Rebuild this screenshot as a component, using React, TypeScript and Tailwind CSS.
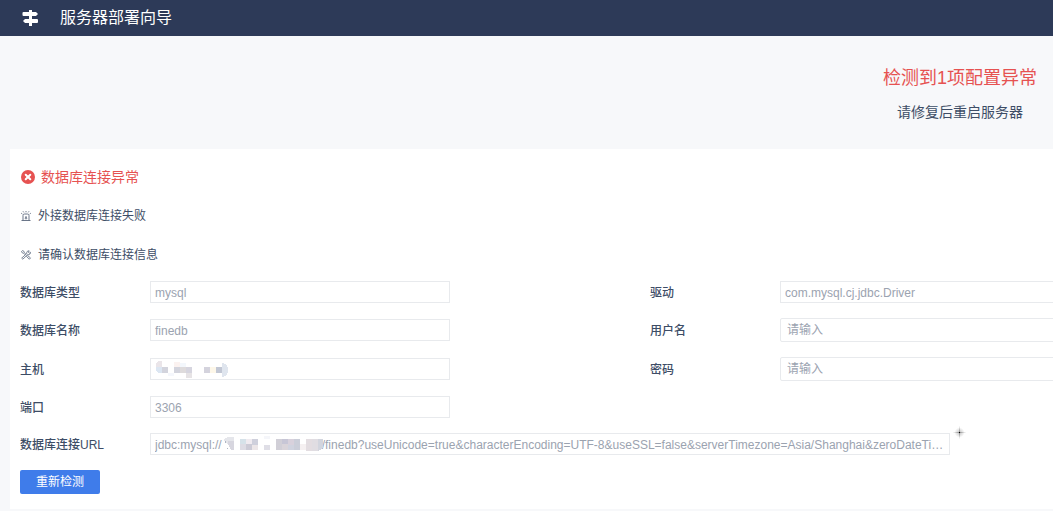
import React from 'react';

const labelClass = 'w-[130px] shrink-0 pt-0.5 text-xs font-medium text-[#3d4d66]';
const readonlyClass =
  'h-[22px] w-full border border-[#e8eaed] bg-white px-1 pt-px text-xs text-[#9ba3b0] text-ellipsis outline-none';
const editableClass =
  'h-6 w-full rounded-xs border border-[#e8eaed] bg-white px-1.5 text-xs text-[#3d4d66] placeholder:text-[#9ba3b0] outline-none';

// The address part is hidden, so the value only keeps room for it
const hiddenHost = '\u00a0'.repeat(30);
const url = `jdbc:mysql://${hiddenHost}/finedb?useUnicode=true&characterEncoding=UTF-8&useSSL=false&serverTimezone=Asia/Shanghai&zeroDateTimeBehavior=convertToNull`;

type FieldProps = {
  id: string;
  label: string;
  value?: string;
  type?: string;
  editable?: boolean;
  width?: string;
  children?: React.ReactNode;
};

const Field: React.FC<FieldProps> = ({ id, label, value, type = 'text', editable = false, width = 'w-[300px]', children }) => (
  <div className="flex items-center">
    <label htmlFor={id} className={labelClass}>{label}</label>
    <div className={`relative flex shrink-0 ${width}`}>
      {editable ? (
        <input id={id} type={type} placeholder="请输入" className={editableClass} />
      ) : (
        <input id={id} type={type} value={value} readOnly className={readonlyClass} />
      )}
      {children}
    </div>
  </div>
);

const SignpostIcon = () => (
  <svg width="16" height="16" viewBox="0 0 16 16" fill="#fff" aria-hidden="true">
    <path d="M7 0h3v16H7z" />
    <path d="M1.500 2H14l2 2-2 2H1.500Q.5 6 .5 5V3q0-1 1-1z" />
    <path d="M3 9h12q1 0 1 1v2q0 1-1 1H3l-2-2z" />
  </svg>
);

const ErrorIcon = () => (
  <svg width="14" height="14" viewBox="0 0 14 14" aria-hidden="true">
    <circle cx="7" cy="7" r="7" fill="#e65251" />
    <path d="M4.700 4.700l4.600 4.600M9.300 4.700L4.700 9.300" stroke="#fff" strokeWidth="2" strokeLinecap="round" />
  </svg>
);

const AlarmIcon = () => (
  <svg width="12" height="12" viewBox="0 0 12 12" fill="none" stroke="#5b687d" strokeWidth="0.9" aria-hidden="true">
    <path d="M3 10.500V5.500q0-1.500 1.500-1.500h3q1.500 0 1.500 1.500v5M1.500 10.500h9" />
    <path d="M6 1v1.300M3 1.300l.8 1.100M9 1.300l-.8 1.100M1.200 3.200l1.100.8M10.800 3.200l-1.100.8" />
    <path d="M6 6v1.500" />
    <circle cx="6" cy="8.200" r=".8" />
  </svg>
);

const RepairIcon = () => (
  <svg width="12" height="12" viewBox="0 0 12 12" fill="none" stroke="#5b687d" strokeWidth="0.8" aria-hidden="true">
    <path d="M1.500 2.500l1-.9 1.500.8.3 1.200 1.500 1.300M1.500 2.500l.8 1.400 1.200.3 1.400 1.500" />
    <path d="M6.600 7.600l1-1 2.900 2.300-1.100 1.300z" />
    <path d="M10.500 3.300L9.300 4.200l-1-.9.900-1.400a2 2 0 0 0-2.400 2.600L1.700 9.100l1.100 1.100 5-4.700a2 2 0 0 0 2.700-2.200z" />
  </svg>
);

const HostMask = () => (
  <svg className="absolute left-[5px] top-[2px]" width="74" height="18" viewBox="0 0 74 18" shapeRendering="crispEdges" aria-hidden="true">
    <path d="M1 7V4q1-3 4-3h2v6z" fill="#eae5e9" />
    <path d="M1 7h6v6H4q-3-1-3-4z" fill="#dce6f2" />
    <path d="M7 7h6v6H7z" fill="#d3d4dd" />
    <path d="M19 2h6v5h-6z" fill="#fbf2f0" />
    <path d="M25 3h6v4h-6z" fill="#f3f7fc" />
    <path d="M13 13h6v3h-6z" fill="#f5f7fc" />
    <path d="M19 7h6v6h-6z" fill="#d3d4dd" />
    <path d="M25 7h6v6h-6z" fill="#dedbdc" />
    <path d="M31 7h6v6h-6z" fill="#d6d5df" />
    <path d="M31 13h6v5h-6z" fill="#e6e3e5" />
    <path d="M49 7h6v6h-6z" fill="#d4d3dd" />
    <path d="M55 7h6v6h-6z" fill="#fdf7e9" />
    <path d="M61 7h6v6h-6z" fill="#c2c7d4" />
    <path d="M67 3q6 1 6 7t-6 7z" fill="#dfe5ee" />
  </svg>
);

const UrlMask = () => (
  <svg className="absolute left-[73px] top-[2px]" width="102" height="18" viewBox="0 0 102 18" shapeRendering="crispEdges" aria-hidden="true">
    <path d="M1 5q2-3 6-3h4v4H7v3H4z" fill="#e5e6eb" />
    <path d="M5 6h6v9H8q-2-3-3-6z" fill="#d7d6df" />
    <path d="M2 6h1v2H2zM4 13h1v1H4z" fill="#aeb5c1" />
    <path d="M17 4h6v5h-6z" fill="#d6e2e9" />
    <path d="M17 9h6v6h-6z" fill="#dddce4" />
    <path d="M23 4h6v5h-6z" fill="#f0ebf0" />
    <path d="M23 9h6v6h-6z" fill="#cccbd6" />
    <path d="M29 4h6v6h-6z" fill="#cfd0dc" />
    <path d="M29 10h6v5h-6z" fill="#ece6e8" />
    <path d="M41 1h6v3h-6z" fill="#f5f6fa" />
    <path d="M41 10h6v5h-6z" fill="#dfdee6" />
    <path d="M53 4h6v11h-6z" fill="#d1cfd7" />
    <path d="M59 4h6v5h-6z" fill="#c7c6d6" />
    <path d="M59 9h6v6h-6z" fill="#d9d4da" />
    <path d="M65 4h6v6h-6z" fill="#d8d1dc" />
    <path d="M65 10h6v5h-6z" fill="#d0d3df" />
    <path d="M71 4h6v11h-6z" fill="#cbced9" />
    <path d="M77 9h6v6h-6z" fill="#f5f0f1" />
    <path d="M83 4h6v12h-6z" fill="#e3dde1" />
    <path d="M89 4h6v12h-6z" fill="#e0dde2" />
    <path d="M95 4h5v8q-2 3-5 4z" fill="#d2d5de" />
  </svg>
);

const Glint = () => (
  <svg className="absolute -right-[17px] -top-2" width="15" height="15" viewBox="0 0 15 15" aria-hidden="true">
    <defs>
      <radialGradient id="glow">
        <stop offset="0" stopColor="#555" stopOpacity=".5" />
        <stop offset="1" stopColor="#555" stopOpacity="0" />
      </radialGradient>
    </defs>
    <circle cx="7.500" cy="7.500" r="5" fill="url(#glow)" opacity=".7" />
    <ellipse cx="7.500" cy="7.500" rx="7" ry="1" fill="url(#glow)" />
    <ellipse cx="7.500" cy="7.500" rx="1" ry="7" fill="url(#glow)" />
    <path d="M7 7h1v1H7z" fill="#000" />
  </svg>
);

const App: React.FC = () => {
  return (
    <div className="min-h-screen overflow-hidden bg-[#f7f8fa] font-['Liberation_Sans','Noto_Sans_CJK_SC',sans-serif] text-[#3d4d66]">
      <header className="flex h-9 items-center gap-[22px] bg-[#2d3a58] px-[22px] text-white">
        <SignpostIcon />
        <h1 className="text-base leading-6">服务器部署向导</h1>
      </header>

      <div className="flex justify-end px-4 pt-7 pb-[27px]">
        <div className="text-center">
          <h2 className="text-lg leading-7 text-[#e65251]">检测到1项配置异常</h2>
          <p className="mt-2.5 text-sm leading-5">请修复后重启服务器</p>
        </div>
      </div>

      <main className="ml-2.5 bg-white px-2.5 pt-[18px] pb-[15px]">
        <div className="flex items-center gap-1.5 pl-px text-sm leading-5 text-[#e65251]">
          <ErrorIcon />
          <h3>数据库连接异常</h3>
        </div>
        <div className="mt-[19px] flex items-center gap-1.5 text-xs leading-5">
          <AlarmIcon />
          <p>外接数据库连接失败</p>
        </div>
        <div className="mt-[19px] flex items-center gap-1.5 text-xs leading-5">
          <RepairIcon />
          <p>请确认数据库连接信息</p>
        </div>

        <form className="mt-4 flex flex-col gap-[15px]" onSubmit={(e) => e.preventDefault()}>
          <div className="flex items-center gap-[200px]">
            <Field id="db-type" label="数据库类型" value="mysql" />
            <Field id="driver" label="驱动" value="com.mysql.cj.jdbc.Driver" />
          </div>
          <div className="flex items-center gap-[200px]">
            <Field id="db-name" label="数据库名称" value="finedb" />
            <Field id="user" label="用户名" editable />
          </div>
          <div className="flex items-center gap-[200px]">
            <Field id="host" label="主机" value="">
              <HostMask />
            </Field>
            <Field id="password" label="密码" type="password" editable />
          </div>
          <Field id="port" label="端口" value="3306" />
          <Field id="url" label="数据库连接URL" value={url} width="w-[800px]">
            <UrlMask />
            <Glint />
          </Field>
          <button type="submit" className="h-6 w-20 rounded-xs bg-[#3f7cea] text-xs text-white">
            重新检测
          </button>
        </form>
      </main>
    </div>
  );
};

export default App;
